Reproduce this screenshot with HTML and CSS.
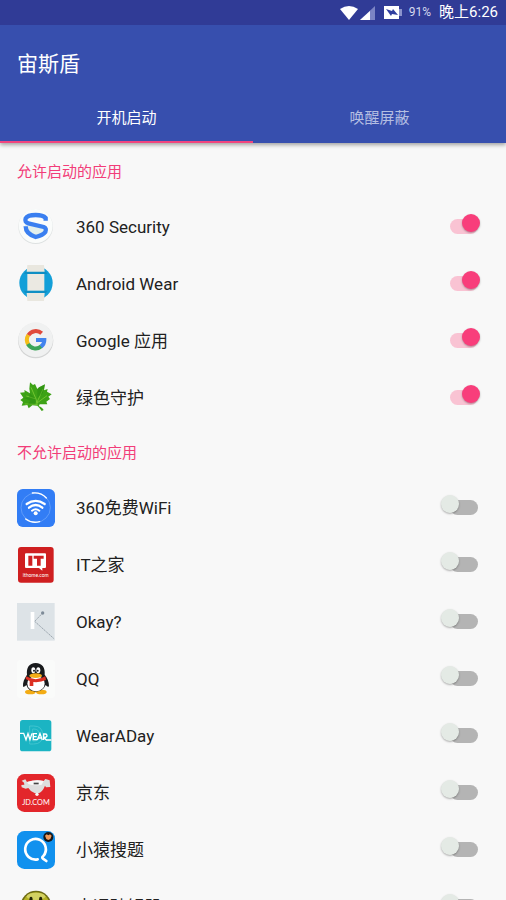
FILE: index.html
```
<!DOCTYPE html>
<html lang="zh-CN">
<head>
  <meta charset="UTF-8">
  <meta name="viewport" content="width=device-width, initial-scale=1">
  <title>宙斯盾</title>
  <link rel="stylesheet" href="styles.css">
</head>
<body>
<header class="app-bar">
  <div class="status-bar">
    <svg class="status-wifi" viewBox="0 0 18 14"><path d="M0 3Q9-3 18 3L9 14Z" fill="#fff"/></svg>
    <svg class="status-signal" viewBox="0 0 15 14"><path d="M0 14L15 0V14Z" fill="#7c84c4"/><path d="M0 14L10 5V14Z" fill="#fff"/></svg>
    <svg class="status-battery" viewBox="0 0 18 13"><path d="M0 0H15V13H0Z" fill="#fff"/><path d="M15 3H18V10H15Z" fill="#8c93cc"/><path d="M2 3L8 5L9 3L14 9L8 8L7 10Z" fill="#303f9f"/></svg>
    <span class="battery-level">91%</span>
    <span class="clock">晚上6:26</span>
  </div>
  <h1>宙斯盾</h1>
  <nav class="tabs">
    <button class="tab active" type="button">开机启动</button>
    <button class="tab" type="button">唤醒屏蔽</button>
  </nav>
</header>

<main>
  <h2>允许启动的应用</h2>
  <ul class="app-list">
    <li>
      <label class="app-row">
        <svg class="app-icon" viewBox="0 0 114 114">
          <circle cx="56" cy="56" r="52" fill="#dde1e1"/>
          <circle cx="56" cy="54" r="51" fill="#fafcfb"/>
          <path d="M24 50L88 64Q84 82 56 90Q28 80 24 50Z" fill="#e3efec"/>
          <path d="M86 38V30Q78 21 56 21Q32 21 26 31Q22 43 34 46L80 57Q90 61 85 72Q78 82 56 87Q26 78 26 55" fill="none" stroke="#3a7ff0" stroke-width="13"/>
        </svg>
        <span class="app-name">360 Security</span>
        <input class="switch" type="checkbox" checked>
      </label>
    </li>
    <li>
      <label class="app-row">
        <svg class="app-icon" viewBox="0 0 114 114">
          <circle cx="57" cy="54" r="50" fill="#139fd8"/>
          <path d="M31 0H81L83 22H29ZM29 84H83L81 108H31Z" fill="#e9e7df"/>
          <path d="M25 20H87L91 27H21ZM21 77H91L87 84H25Z" fill="#0f8fc4"/>
          <path d="M31 27H82V77H31Z" fill="#ebe9e2"/>
        </svg>
        <span class="app-name">Android Wear</span>
        <input class="switch" type="checkbox" checked>
      </label>
    </li>
    <li>
      <label class="app-row">
        <svg class="app-icon" viewBox="0 0 114 114">
          <circle cx="56" cy="56" r="53" fill="#d3d4d4"/>
          <circle cx="56" cy="53" r="52" fill="#f0f1f1"/>
          <g fill="none" stroke-width="12">
            <path d="M34 40A26 26 0 0 1 74 34" stroke="#e04a3c"/>
            <path d="M34 67A26 26 0 0 1 34 39" stroke="#f5bd18"/>
            <path d="M73 73A26 26 0 0 1 33 66" stroke="#3ba557"/>
            <path d="M57 54H82Q82 66 72 74" stroke="#4284ee"/>
          </g>
        </svg>
        <span class="app-name">Google 应用</span>
        <input class="switch" type="checkbox" checked>
      </label>
    </li>
    <li>
      <label class="app-row">
        <svg class="app-icon" viewBox="0 0 114 114">
          <path d="M39 10L48 18L54 15L61 30L66 25L84 16L81 34L92 30L90 38L104 46L94 53L99 60L88 68L91 76L68 76L65 82Q72 82 80 93L74 96Q68 86 61 80L46 79L35 88L31 78L14 80L18 69L10 63L19 56L9 41L23 40L22 33L39 43L37 29Z" fill="#3da216"/>
          <path d="M61 79L57 60L42 25M57 60L28 51M60 70L78 30M60 72L90 50M60 76L23 75" fill="none" stroke="#8bd33d" stroke-width="2"/>
          <path d="M61 30L66 25L84 16L77 43L61 58ZM39 43L57 60L54 76L31 78L40 65L19 56L36 55Z" fill="#1f800d" opacity=".35"/>
        </svg>
        <span class="app-name">绿色守护</span>
        <input class="switch" type="checkbox" checked>
      </label>
    </li>
  </ul>

  <h2>不允许启动的应用</h2>
  <ul class="app-list">
    <li>
      <label class="app-row">
        <svg class="app-icon" viewBox="0 0 114 114">
          <rect width="114" height="114" rx="17" fill="#327df5"/>
          <circle cx="56" cy="56" r="44" fill="none" stroke="#76aafa" stroke-width="2"/>
          <g fill="none" stroke="#fff" stroke-linecap="round">
            <path d="M46 12Q72 9 88 27M26 90Q44 104 68 98" stroke-width="4"/>
            <path d="M29 45Q56 26 83 45" stroke-width="7"/>
            <path d="M36 56Q56 40 76 56" stroke-width="7"/>
            <path d="M45 65Q56 56 67 65" stroke-width="6"/>
          </g>
          <circle cx="56" cy="73" r="6" fill="#fff"/>
        </svg>
        <span class="app-name">360免费WiFi</span>
        <input class="switch" type="checkbox">
      </label>
    </li>
    <li>
      <label class="app-row">
        <svg class="app-icon" viewBox="0 0 114 114">
          <rect x="3" y="3" width="107" height="107" rx="9" fill="#cf1f20"/>
          <path d="M27 22H84Q87 22 87 25V63Q87 66 84 66H76V74L66 66H27Q24 66 24 63V25Q24 22 27 22Z" fill="#fff"/>
          <path d="M34 29H46V59H34ZM50 29H80V38H71V59H60V38H50Z" fill="#cf1f20"/>
          <text class="icon-text" x="56" y="92" font-size="15">ithome.com</text>
        </svg>
        <span class="app-name">IT之家</span>
        <input class="switch" type="checkbox">
      </label>
    </li>
    <li>
      <label class="app-row">
        <svg class="app-icon" viewBox="0 0 114 114">
          <rect width="113" height="113" fill="#dde3e7"/>
          <path d="M41 27H52V78H41Z" fill="#fff"/>
          <path d="M76 31L53 55L112 108" fill="none" stroke="#9aa4ad" stroke-width="3" stroke-dasharray="5 2"/>
          <circle cx="77" cy="30" r="5" fill="#7e8b98"/>
        </svg>
        <span class="app-name">Okay?</span>
        <input class="switch" type="checkbox">
      </label>
    </li>
    <li>
      <label class="app-row">
        <svg class="app-icon" viewBox="0 0 114 114">
          <rect width="114" height="114" rx="12" fill="#fafbfa"/>
          <ellipse cx="40" cy="96" rx="16" ry="7" fill="#f3ac14"/>
          <ellipse cx="73" cy="96" rx="16" ry="7" fill="#f3ac14"/>
          <path d="M56 9C36 9 28 24 30 44C22 56 17 66 18 80Q23 82 28 75Q34 94 56 95Q78 94 86 75Q92 82 96 79C96 65 91 54 83 44C85 24 76 9 56 9Z" fill="#191b1d"/>
          <ellipse cx="57" cy="71" rx="26" ry="23" fill="#fff"/>
          <ellipse cx="49" cy="31" rx="6" ry="9" fill="#fff"/>
          <ellipse cx="64" cy="31" rx="6" ry="9" fill="#fff"/>
          <circle cx="51" cy="32" r="3" fill="#191b1d"/>
          <circle cx="62" cy="32" r="3" fill="#191b1d"/>
          <path d="M28 49Q56 66 85 49L87 60Q70 68 49 66V78H38V63L26 57Z" fill="#dc2f22"/>
          <ellipse cx="56" cy="47" rx="19" ry="7" fill="#f4ad18"/>
        </svg>
        <span class="app-name">QQ</span>
        <input class="switch" type="checkbox">
      </label>
    </li>
    <li>
      <label class="app-row">
        <svg class="app-icon" viewBox="0 0 114 114">
          <rect x="9" y="9" width="94" height="94" rx="8" fill="#1bb4c3"/>
          <path d="M38 27H50Q77 27 77 54Q77 81 50 81H38ZM47 36V72H51Q67 72 67 54Q67 36 51 36Z" fill="none" stroke="#52cbd5" stroke-width="2"/>
          <path d="M9 49H20L27 68L33 50L39 68L45 49M60 50H49V68H60M49 59H59M61 69L69 50L76 69M65 63H73M80 69V51H85Q90 51 90 56Q90 61 81 61L88 69H103" fill="none" stroke="#fff" stroke-width="4"/>
        </svg>
        <span class="app-name">WearADay</span>
        <input class="switch" type="checkbox">
      </label>
    </li>
    <li>
      <label class="app-row">
        <svg class="app-icon" viewBox="0 0 114 114">
          <rect width="114" height="114" rx="22" fill="#e3262b"/>
          <path d="M14 20L25 16L30 24Q56 15 80 21L85 15L98 19L100 39L87 40L84 35Q76 56 62 58H54Q41 54 34 42L26 44L14 40L13 33L22 32L21 26Z" fill="#dedede"/>
          <path d="M30 24Q56 15 80 21L74 32Q50 36 34 30Z" fill="#f7f7f7"/>
          <path d="M50 26H65V31H50Z" fill="#444"/>
          <circle cx="60" cy="61" r="5" fill="#f7f7f7"/>
          <text class="icon-text" x="57" y="92" font-size="22">JD.COM</text>
        </svg>
        <span class="app-name">京东</span>
        <input class="switch" type="checkbox">
      </label>
    </li>
    <li>
      <label class="app-row">
        <svg class="app-icon" viewBox="0 0 114 114">
          <rect width="114" height="114" rx="22" fill="#1191ee"/>
          <path d="M62 85A31 31 0 1 1 79 75Q73 79 78 83L88 90" fill="none" stroke="#fff" stroke-width="8" stroke-linecap="round"/>
          <circle cx="94" cy="18" r="15" fill="#15191c"/>
          <path d="M84 14L89 10L94 13L99 10L104 14L100 24L94 27L88 24Z" fill="#f09a5c"/>
        </svg>
        <span class="app-name">小猿搜题</span>
        <input class="switch" type="checkbox">
      </label>
    </li>
    <li>
      <label class="app-row">
        <svg class="app-icon" viewBox="0 0 114 114">
          <circle cx="57" cy="54" r="46" fill="#6d6a14"/>
          <circle cx="57" cy="54" r="41" fill="#b5b224"/>
          <ellipse cx="57" cy="25" rx="28" ry="11" fill="#d3d162"/>
          <ellipse cx="42" cy="36" rx="5" ry="10" fill="#24240a"/>
          <ellipse cx="71" cy="36" rx="5" ry="10" fill="#24240a"/>
          <path d="M32 66Q57 92 82 66" fill="none" stroke="#24240a" stroke-width="5"/>
        </svg>
        <span class="app-name">幸运破解器</span>
        <input class="switch" type="checkbox">
      </label>
    </li>
  </ul>
</main>
</body>
</html>
```

FILE: styles.css
```
* {
  box-sizing: border-box;
}
body {
  display: flex;
  flex-direction: column;
  height: 100vh;
  margin: 0;
  font-family: Roboto, "Noto Sans CJK SC", sans-serif;
  background-color: #f8f8f8;
  color: #212121;
}
.app-bar {
  position: relative;
  flex: none;
  background-color: #374fae;
  color: #fff;
  box-shadow: 0 2px 4px rgba(0, 0, 0, 0.35);
}
.status-bar {
  display: flex;
  align-items: center;
  justify-content: flex-end;
  height: 25px;
  padding: 0 8px;
  line-height: 25px;
  background-color: #303b96;
}
.status-wifi {
  width: 18px;
  height: 14px;
}
.status-signal {
  width: 15px;
  height: 14px;
  margin-left: 2px;
}
.status-battery {
  width: 18px;
  height: 13px;
  margin-left: 9px;
}
.battery-level {
  margin-left: 7px;
  font-size: 12px;
  color: #d5d8ee;
}
.clock {
  margin-left: 8px;
  font-size: 15px;
}
h1 {
  margin: 0;
  padding: 20px 17px 12px;
  font-size: 21px;
  font-weight: 400;
  line-height: 38px;
}
.tabs {
  display: flex;
}
.tab {
  flex: 1;
  height: 48px;
  padding: 0;
  border: none;
  border-bottom: 2px solid transparent;
  background: transparent;
  font-family: inherit;
  font-size: 15px;
  line-height: 46px;
  color: #b4bee2;
  cursor: pointer;
}
.tab.active {
  border-bottom-color: #f1457f;
  color: #fff;
}
main {
  flex: 1;
  min-height: 0;
  padding-top: 2px;
  overflow-y: auto;
  scrollbar-width: none;
}
h2 {
  margin: 0;
  padding: 2px 17px 0;
  font-size: 15px;
  font-weight: 400;
  line-height: 51px;
  color: #f23d79;
}
.app-list {
  margin: 0;
  padding: 0;
  list-style: none;
}
.app-row {
  display: flex;
  align-items: center;
  height: 57px;
  padding: 10px 26px 9px 17px;
  cursor: pointer;
}
.app-icon {
  flex: none;
  width: 38px;
  height: 38px;
}
.icon-text {
  font-family: Lato, sans-serif;
  text-anchor: middle;
  fill: #fff;
}
.app-name {
  flex: 1;
  margin-left: 21px;
  font-size: 17px;
  line-height: 38px;
}

/* interruptor */
.switch {
  position: relative;
  width: 39px;
  height: 26px;
  margin: 0;
  appearance: none;
  cursor: pointer;
}
.switch::before {
  content: "";
  position: absolute;
  top: 5px;
  left: 9px;
  width: 28px;
  height: 15px;
  border-radius: 8px;
  background-color: #b4b4b4;
}
.switch::after {
  content: "";
  position: absolute;
  top: 0;
  left: 0;
  width: 18px;
  height: 18px;
  border-radius: 50%;
  background-color: #e4eae5;
  box-shadow: 0 1px 2px rgba(0, 0, 0, 0.3);
}
.switch:checked::before {
  background-color: #f9c3d3;
}
.switch:checked::after {
  left: 21px;
  background-color: #f83e7b;
}
```
